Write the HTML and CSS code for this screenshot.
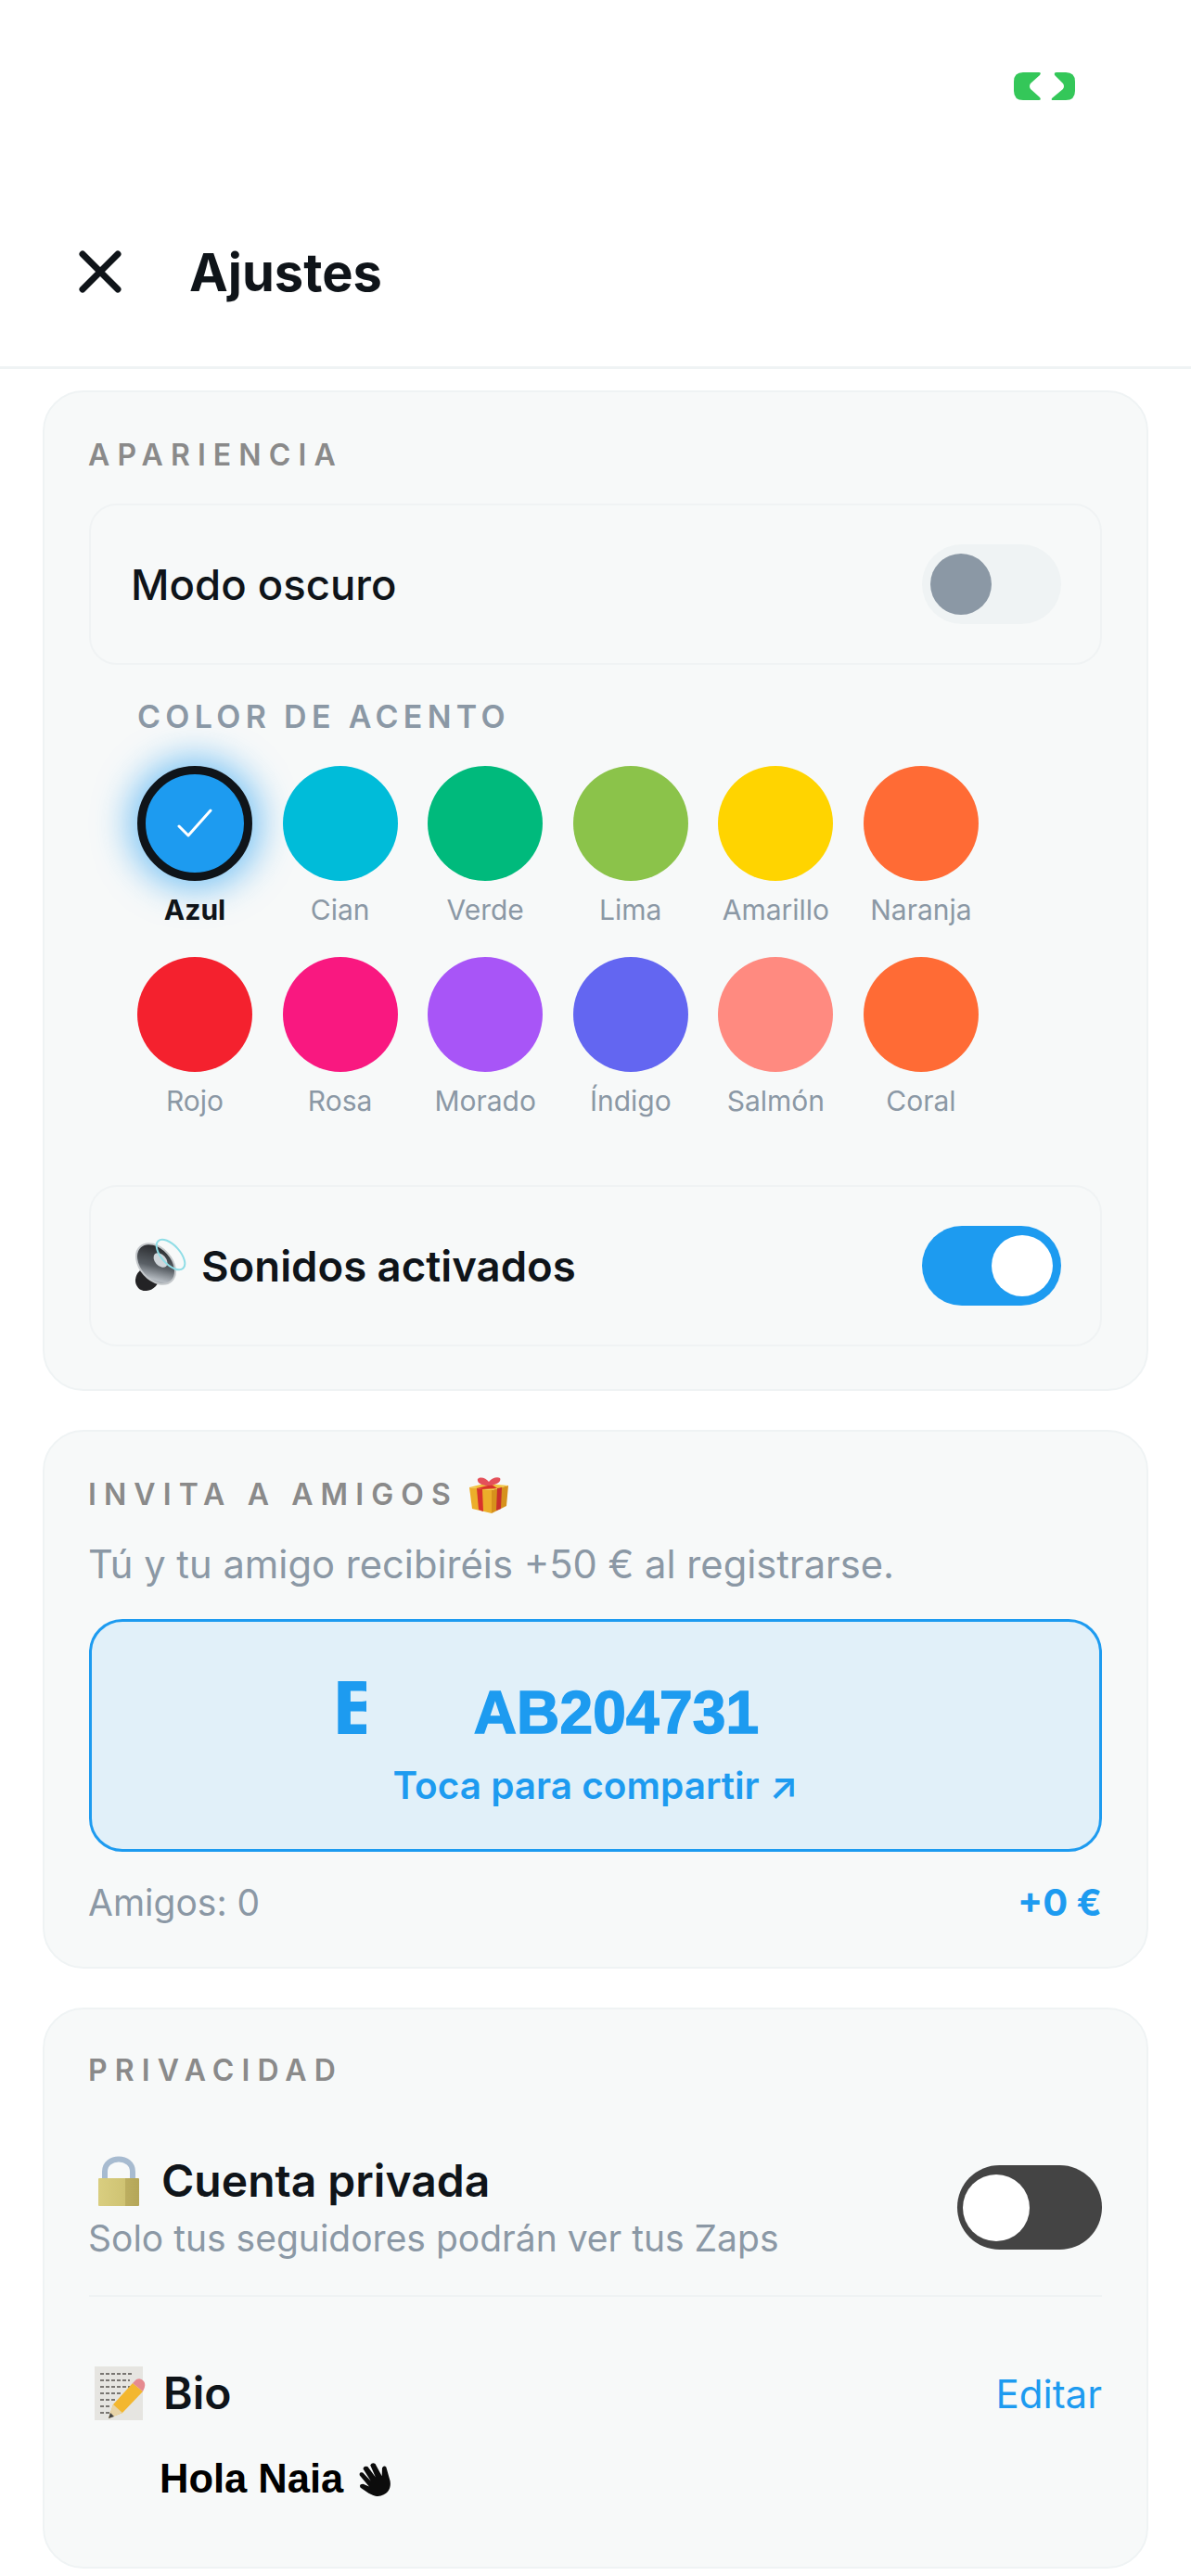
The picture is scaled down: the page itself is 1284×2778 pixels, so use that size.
FILE: index.html
```html
<!DOCTYPE html>
<html lang="es">
<head>
    <meta charset="UTF-8">
    <meta name="viewport" content="width=device-width, initial-scale=1.0">
    <title>Ajustes</title>
    <link rel="stylesheet" href="styles.css">
</head>
<body>
    <!-- Status area -->
    <div class="status">
        <svg class="status-icon" width="66" height="30" viewBox="0 0 66 30">
            <path fill="#34c759" d="M10 0H27Q30 0 28 3L18 12Q16 15 18 18L28 27Q30 30 27 30H10Q0 30 0 20V10Q0 0 10 0Z"/>
            <path fill="#34c759" d="M46 0H56Q66 0 66 10V20Q66 30 56 30H42Q40 30 41 28L53 18Q55 15 53 12L44 3Q43 0 46 0Z"/>
        </svg>
    </div>

    <!-- Header -->
    <header class="header">
        <svg class="close" width="46" height="46" viewBox="0 0 46 46">
            <path d="M4 4L42 42M42 4L4 42" stroke="#0f1419" stroke-width="7" stroke-linecap="round"/>
        </svg>
        <h1>Ajustes</h1>
    </header>

    <main class="main">
        <!-- Apariencia -->
        <section class="card card-look">
            <h2 class="section-title">APARIENCIA</h2>
            <div class="row">
                <span class="row-label plain">Modo oscuro</span>
                <div class="toggle toggle-off"><span class="knob"></span></div>
            </div>

            <h3 class="accent-title">COLOR DE ACENTO</h3>
            <div class="swatches">
                <div class="swatch-item selected">
                    <div class="swatch azul">
                        <svg width="38" height="32" viewBox="0 0 38 32"><path d="M2 19L12 29L36 2" fill="none" stroke="#fff" stroke-width="3" stroke-linecap="round" stroke-linejoin="round"/></svg>
                    </div>
                    <span>Azul</span>
                </div>
                <div class="swatch-item"><div class="swatch cian"></div><span>Cian</span></div>
                <div class="swatch-item"><div class="swatch verde"></div><span>Verde</span></div>
                <div class="swatch-item"><div class="swatch lima"></div><span>Lima</span></div>
                <div class="swatch-item"><div class="swatch amarillo"></div><span>Amarillo</span></div>
                <div class="swatch-item"><div class="swatch naranja"></div><span>Naranja</span></div>
                <div class="swatch-item"><div class="swatch rojo"></div><span>Rojo</span></div>
                <div class="swatch-item"><div class="swatch rosa"></div><span>Rosa</span></div>
                <div class="swatch-item"><div class="swatch morado"></div><span>Morado</span></div>
                <div class="swatch-item"><div class="swatch indigo"></div><span>Índigo</span></div>
                <div class="swatch-item"><div class="swatch salmon"></div><span>Salmón</span></div>
                <div class="swatch-item"><div class="swatch coral"></div><span>Coral</span></div>
            </div>

            <div class="row row-sound">
                <span class="row-label">
                    <svg class="emoji speaker" width="56" height="60" viewBox="14 10 56 60">
                        <defs>
                            <linearGradient id="spk" x1="0" y1="0" x2="1" y2="1">
                                <stop offset="0" stop-color="#141416"/>
                                <stop offset="0.550" stop-color="#5a6066"/>
                                <stop offset="0.800" stop-color="#b6bcc2"/>
                                <stop offset="1" stop-color="#3a3d40"/>
                            </linearGradient>
                        </defs>
                        <ellipse cx="28" cy="54" rx="12" ry="14" transform="rotate(45 28 54)" fill="#232325"/>
                        <ellipse cx="37" cy="38" rx="25" ry="17" transform="rotate(48 37 38)" fill="url(#spk)" stroke="#c3c7ca" stroke-width="2"/>
                        <ellipse cx="42" cy="34" rx="9" ry="6" transform="rotate(48 42 34)" fill="#cfd5da"/>
                        <ellipse cx="53" cy="28" rx="20" ry="10" transform="rotate(48 53 28)" fill="none" stroke="#8fdde6" stroke-width="2"/>
                    </svg>
                    Sonidos activados
                </span>
                <div class="toggle toggle-on"><span class="knob"></span></div>
            </div>
        </section>

        <!-- Invita a amigos -->
        <section class="card card-invite">
            <h2 class="section-title with-emoji">INVITA A AMIGOS
                <svg class="emoji" width="42" height="39" viewBox="0 0 42 39">
                    <path d="M0 11L24 14V39L3 34Z" fill="#ecae2a"/>
                    <path d="M24 14L42 9L40 31L24 39Z" fill="#d6911c"/>
                    <path d="M0 11L16 7L42 9L24 14Z" fill="#f2c33e"/>
                    <path d="M8 12L14 13L15 37L10 35Z" fill="#d8322c"/>
                    <path d="M30 12L35 11L34 34L29 36Z" fill="#c9302c"/>
                    <path d="M8 12L24 8L30 12L14 13Z" fill="#d8322c"/>
                    <path d="M20 9C12 9 8 5 9 2C12 -1 18 1 21 5C24 1 30 -1 33 1C35 5 29 9 20 9Z" fill="#e4505a"/>
                </svg>
            </h2>
            <p class="invite-text">Tú y tu amigo recibiréis +50 € al registrarse.</p>
            <div class="code-box">
                <span class="code-ghost">B</span>
                <strong class="code">AB204731</strong>
                <span class="code-share">Toca para compartir ↗</span>
            </div>
            <div class="invite-foot">
                <span>Amigos: 0</span>
                <strong>+0 €</strong>
            </div>
        </section>

        <!-- Privacidad -->
        <section class="card card-privacy">
            <h2 class="section-title">PRIVACIDAD</h2>
            <div class="privacy-row">
                <div>
                    <div class="privacy-name">
                        <svg class="emoji" width="46" height="54" viewBox="0 0 46 54">
                            <defs>
                                <linearGradient id="lck" x1="0" y1="0" x2="1" y2="0">
                                    <stop offset="0" stop-color="#d9ce80"/>
                                    <stop offset="0.650" stop-color="#cfc373"/>
                                    <stop offset="0.660" stop-color="#bcae60"/>
                                    <stop offset="1" stop-color="#b4a658"/>
                                </linearGradient>
                            </defs>
                            <path d="M7 26V17C7 -1 37 -1 37 17V26" fill="none" stroke="#a7bbd0" stroke-width="6"/>
                            <rect x="0" y="24" width="44" height="30" rx="1" fill="url(#lck)"/>
                        </svg>
                        Cuenta privada
                    </div>
                    <p class="privacy-sub">Solo tus seguidores podrán ver tus Zaps</p>
                </div>
                <div class="toggle toggle-private"><span class="knob"></span></div>
            </div>
            <div class="bio-row">
                <div class="privacy-name">
                    <svg class="emoji" width="55" height="58" viewBox="0 0 55 58">
                        <rect x="0" y="0" width="52" height="58" fill="#e6e5e1"/>
                        <path d="M6 8H42M6 15H38M6 22H38M6 29H28M6 36H22M6 43H18M6 50H16" stroke="#55524e" stroke-width="1.500" stroke-dasharray="4 2"/>
                        <path d="M15 56L20 41L41 18L52 27L30 50Z" fill="#f3b72f"/>
                        <path d="M15 56L20 41L30 50Z" fill="#e8d4a8"/>
                        <path d="M15 56L17 50L21 54Z" fill="#444"/>
                        <path d="M41 18L45 14Q50 12 53 16Q56 20 52 27Z" fill="#e58a90"/>
                    </svg>
                    Bio
                </div>
                <span class="bio-edit">Editar</span>
            </div>
            <p class="bio-text">Hola Naia
                <svg class="emoji" width="37" height="37" viewBox="0 0 34 34">
                    <g transform="rotate(-28 17 17)">
                        <path d="M11 33C7 30 4 24 1 18Q1 14 5 16L9 21L6 7Q7 3 10 6L13 17L12 3Q14 0 17 3L19 16L20 3Q23 1 25 4L25 18L29 11Q32 9 33 12L30 26C28 32 24 35 18 35Q14 35 11 33Z" fill="#0c0c0c"/>
                    </g>
                </svg>
            </p>
        </section>
    </main>
</body>
</html>
```

FILE: styles.css
```css
*{
    margin: 0;
    padding: 0;
    box-sizing: border-box;
}

body{
    background: #fff;
    font-family: "Inter", "Liberation Sans", sans-serif;
    color: #0f1419;
    width: 1284px;
    height: 2778px;
    overflow: hidden;
}

.status{
    height: 240px;
    padding: 78px 125px 0 0;
    display: flex;
    justify-content: flex-end;
}

.status-icon{
    display: block;
}

.header{
    height: 158px;
    border-bottom: 3px solid #eff3f4;
    display: flex;
    align-items: flex-start;
    padding: 30px 0 0 85px;
    gap: 73px;
}

.header h1{
    font-size: 56px;
    font-weight: 700;
    line-height: 46px;
    letter-spacing: 0;
    margin-top: 1px;
}

.main{
    padding: 23px 46px 0;
    display: flex;
    flex-direction: column;
    gap: 42px;
}

.card{
    background: #f7f9f9;
    border: 2px solid #eff3f4;
    border-radius: 44px;
    padding: 46px 48px 46px;
}

.card-look{
    padding-top: 48px;
}

.section-title{
    font-size: 32px;
    font-weight: 600;
    line-height: 40px;
    letter-spacing: 8.100px;
    color: #8a8a8a;
    margin-left: -1px;
}

.with-emoji{
    display: flex;
    align-items: center;
    gap: 12px;
}

.emoji{
    flex-shrink: 0;
}

.speaker{
    margin-left: 4px;
}

/* rows */
.row{
    height: 174px;
    margin-top: 32px;
    border: 2px solid #f0f3f4;
    border-radius: 30px;
    display: flex;
    align-items: center;
    justify-content: space-between;
    padding: 0 42px 0 43px;
}

.row-label{
    display: flex;
    align-items: center;
    gap: 16px;
    font-size: 45.500px;
    font-weight: 600;
}

.row-label.plain{
    font-weight: 500;
}

.row-sound{
    margin-top: 73px;
}

/* toggles */
.toggle{
    border-radius: 50px;
    display: flex;
    align-items: center;
}

.toggle-off{
    width: 150px;
    height: 86px;
    background: #eff3f4;
    padding-left: 9px;
}

.toggle-off .knob{
    background: #8b98a5;
}

.toggle-on{
    width: 150px;
    height: 86px;
    background: #1d9bf0;
    justify-content: flex-end;
    padding-right: 9px;
}

.knob{
    display: block;
    width: 66px;
    height: 66px;
    border-radius: 50%;
    background: #fff;
}

.toggle-private{
    width: 156px;
    height: 91px;
    background: #444;
    padding-left: 6px;
}

.toggle-private .knob{
    width: 72px;
    height: 72px;
}

/* accent colours */
.accent-title{
    margin: 36px 0 0 52px;
    font-size: 34px;
    font-weight: 600;
    line-height: 40px;
    letter-spacing: 5.300px;
    color: #8b98a5;
}

.swatches{
    margin: 33px 0 0 52px;
    display: grid;
    grid-template-columns: repeat(6, 124px);
    column-gap: 32.600px;
    row-gap: 33px;
}

.swatch-item{
    display: flex;
    flex-direction: column;
    align-items: center;
    gap: 13px;
}

.swatch-item span{
    font-size: 30px;
    line-height: 36px;
    color: #8b98a5;
    white-space: nowrap;
}

.swatch{
    width: 124px;
    height: 124px;
    border-radius: 50%;
    display: flex;
    align-items: center;
    justify-content: center;
}

.selected .swatch{
    border: 9px solid #0f1419;
    box-shadow: 0 0 36px 10px rgba(29, 155, 240, 0.55);
}

.selected span{
    color: #0f1419;
    font-weight: 700;
}

.azul{ background: #1d9bf0; }
.cian{ background: #00bcd9; }
.verde{ background: #00ba7c; }
.lima{ background: #8bc34a; }
.amarillo{ background: #ffd400; }
.naranja{ background: #ff6b35; }
.rojo{ background: #f4212e; }
.rosa{ background: #f91880; }
.morado{ background: #a855f7; }
.indigo{ background: #6366f1; }
.salmon{ background: #ff8a80; }
.coral{ background: #ff6b35; }

/* invite */
.card-invite{
    padding-top: 48px;
    padding-bottom: 44px;
}

.invite-text{
    margin: 30px 0 0 -1px;
    font-size: 41.700px;
    line-height: 50px;
    color: #8b98a5;
}

.code-box{
    position: relative;
    margin-top: 34px;
    height: 251px;
    border: 3px solid #1d9bf0;
    border-radius: 36px;
    background: #e1f0f9;
    display: flex;
    flex-direction: column;
    align-items: center;
}

.code{
    margin: 70px 0 0 45px;
    font-family: "Liberation Sans", sans-serif;
    font-size: 64px;
    font-weight: 700;
    line-height: 56px;
    letter-spacing: 0.200px;
    color: #1d9bf0;
    -webkit-text-stroke: 1.500px #1d9bf0;
}

.code-share{
    margin-top: 26px;
    font-size: 40.500px;
    font-weight: 600;
    line-height: 50px;
    color: #1d9bf0;
}

.code-ghost{
    position: absolute;
    left: 261px;
    top: 58px;
    width: 35px;
    height: 70px;
    overflow: hidden;
    font-family: "Liberation Sans", sans-serif;
    font-size: 80px;
    font-weight: 700;
    line-height: 70px;
    color: #1d9bf0;
    -webkit-text-stroke: 2px #1d9bf0;
}

.invite-foot{
    margin-top: 30px;
    display: flex;
    justify-content: space-between;
    align-items: center;
    font-size: 39px;
    line-height: 50px;
    color: #8b98a5;
}

.invite-foot span{
    margin-left: -1px;
}

.invite-foot strong{
    color: #1d9bf0;
    font-size: 40px;
    font-weight: 700;
}

/* privacy */
.privacy-row{
    margin-top: 72px;
    padding-bottom: 39px;
    border-bottom: 2px solid #eff3f4;
    display: flex;
    justify-content: space-between;
    align-items: center;
}

.privacy-name{
    display: flex;
    align-items: center;
    gap: 22px;
    font-size: 48px;
    font-weight: 600;
    line-height: 50px;
    padding-left: 10px;
}

.privacy-sub{
    margin: 13px 0 0 -1px;
    font-size: 39px;
    line-height: 44px;
    color: #8b98a5;
}

.bio-row{
    margin-top: 75px;
    display: flex;
    justify-content: space-between;
    align-items: center;
}

.bio-row .privacy-name{
    padding-left: 6px;
    gap: 19px;
}

.bio-edit{
    font-size: 42px;
    color: #1d9bf0;
}

.bio-text{
    margin: 38px 0 0 76px;
    display: flex;
    align-items: center;
    gap: 15px;
    font-family: "Liberation Sans", sans-serif;
    font-size: 43.500px;
    font-weight: 700;
    line-height: 50px;
    color: #000;
}

.card-privacy{
    padding-bottom: 70px;
}
```
